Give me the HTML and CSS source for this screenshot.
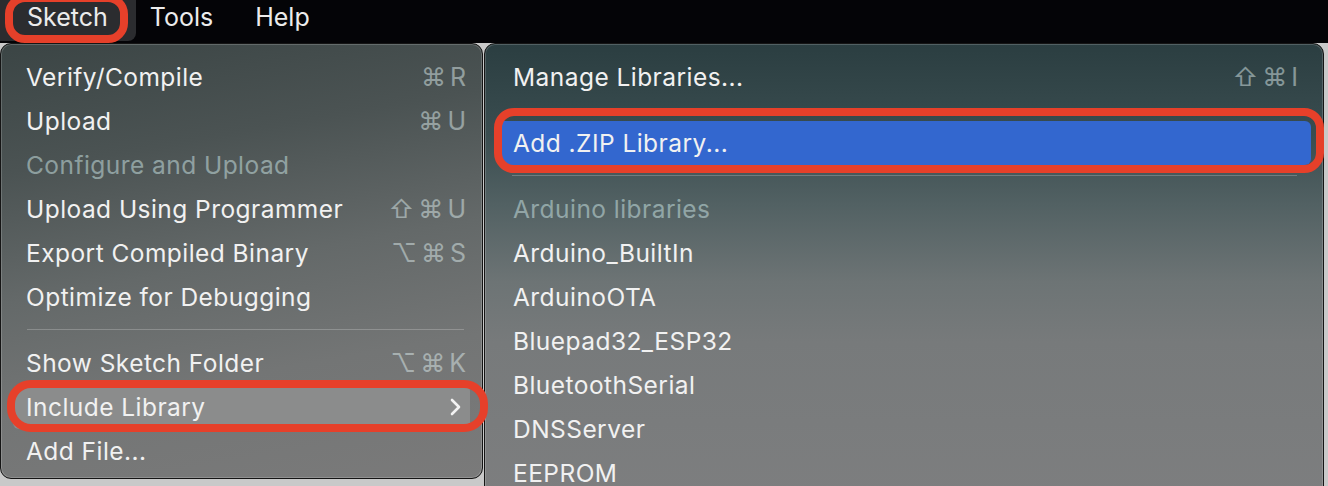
FILE: index.html
```html
<!DOCTYPE html>
<html lang="en">
<head>
    <meta charset="UTF-8">
    <title>Sketch menu</title>
    <link rel="stylesheet" href="styles.css">
</head>
<body>
    <header class="menubar">
        <div class="bar-item active">Sketch</div>
        <div class="bar-item tools">Tools</div>
        <div class="bar-item">Help</div>
    </header>
    <div class="stage">
        <div class="menu main-menu">
            <div class="row"><span>Verify/Compile</span><span class="keys">⌘R</span></div>
            <div class="row"><span>Upload</span><span class="keys">⌘U</span></div>
            <div class="row disabled"><span>Configure and Upload</span></div>
            <div class="row"><span>Upload Using Programmer</span><span class="keys">⇧⌘U</span></div>
            <div class="row"><span>Export Compiled Binary</span><span class="keys">⌥⌘S</span></div>
            <div class="row"><span>Optimize for Debugging</span></div>
            <div class="sep"></div>
            <div class="row"><span>Show Sketch Folder</span><span class="keys">⌥⌘K</span></div>
            <div class="row hover">
                <span>Include Library</span>
                <svg class="chev" width="12" height="18" viewBox="0 0 12 18"><polyline points="2,2 9,9 2,16" fill="none" stroke="#f2f2f2" stroke-width="2.6" stroke-linecap="round" stroke-linejoin="round"/></svg>
            </div>
            <div class="row"><span>Add File...</span></div>
        </div>
        <div class="menu sub-menu">
            <div class="row"><span>Manage Libraries...</span><span class="keys">⇧⌘I</span></div>
            <div class="sep"></div>
            <div class="row selected"><span>Add .ZIP Library...</span></div>
            <div class="sep"></div>
            <div class="row disabled"><span>Arduino libraries</span></div>
            <div class="row"><span>Arduino_BuiltIn</span></div>
            <div class="row"><span>ArduinoOTA</span></div>
            <div class="row"><span>Bluepad32_ESP32</span></div>
            <div class="row"><span>BluetoothSerial</span></div>
            <div class="row"><span>DNSServer</span></div>
            <div class="row"><span>EEPROM</span></div>
        </div>
    </div>
    <!-- red annotation rings drawn over the menus -->
    <div class="ring ring-sketch"></div>
    <div class="ring ring-include"></div>
    <div class="ring ring-zip"></div>
</body>
</html>
```

FILE: styles.css
```css
body {
    margin: 0;
    padding: 0;
    position: relative;
    width: 1328px;
    height: 486px;
    overflow: hidden;
    background-color: #cdcdcd;
    font-family: "Inter", "DejaVu Sans", sans-serif;
    color: #f1f1f1;
}
.menubar {
    display: flex;
    height: 43px;
    background-color: #040407;
    font-size: 25px;
    color: #ececec;
}
.bar-item {
    line-height: 35px;
    padding: 0 21px 0 21px;
}
.bar-item.active {
    padding: 0 28px 0 27px;
    background-color: #2b2c2f;
    border-bottom-right-radius: 8px;
    height: 41px;
}
.bar-item.tools {
    padding-left: 14px;
}
.stage {
    display: flex;
    align-items: flex-start;
    height: 443px;
    background-color: #c9c9c9;
}
.menu {
    box-sizing: border-box;
    border: 1px solid #151515;
    box-shadow: inset 0 0 0 1px rgba(255, 255, 255, 0.18);
    font-size: 24.5px;
    letter-spacing: 0.45px;
}
.main-menu {
    width: 483px;
    height: 436px;
    padding: 11px 0 5px;
    border-radius: 11px;
    background: linear-gradient(170deg, #3b4545 0%, #4b5353 25%, #646969 50%, #737575 72%, #7a7a7a 100%);
}
.sub-menu {
    width: 840px;
    height: 460px;
    margin-left: 1px;
    padding: 11px 0 0;
    border-radius: 11px 11px 0 0;
    background: linear-gradient(180deg, #2b3e41 0%, #3a4d50 20%, #526163 35%, #6d7475 52%, #777a7b 65%, #7d7e7f 100%);
}
.row {
    display: flex;
    align-items: center;
    justify-content: space-between;
    height: 44px;
    margin: 0 12px;
    padding: 0 0 0 13px;
    border-radius: 6px;
    white-space: nowrap;
}
.sub-menu .row {
    padding: 0 9px 0 16px;
}
.row.disabled {
    color: rgba(200, 225, 225, 0.55);
}
.row.hover {
    background-color: #8b8c8c;
    padding-right: 8px;
}
.row.selected {
    background-color: #3367cf;
}
.keys {
    color: rgba(220, 235, 235, 0.5);
    font-size: 25px;
    letter-spacing: 4px;
}
.chev {
    display: block;
}
.sep {
    height: 1px;
    margin: 10px 18px 11px 26px;
    background-color: rgba(255, 255, 255, 0.22);
}
.sub-menu .sep {
    margin: 10px 26px 11px 27px;
}
.ring {
    position: absolute;
    box-sizing: border-box;
    border: 8px solid #e6402a;
}
.ring-sketch {
    left: 5px;
    top: -6px;
    width: 123px;
    height: 49px;
    border-radius: 20px;
}
.ring-include {
    left: 7px;
    top: 380px;
    width: 481px;
    height: 52px;
    border-radius: 24px;
}
.ring-zip {
    left: 494px;
    top: 108px;
    width: 830px;
    height: 65px;
    border-radius: 20px;
}
```
